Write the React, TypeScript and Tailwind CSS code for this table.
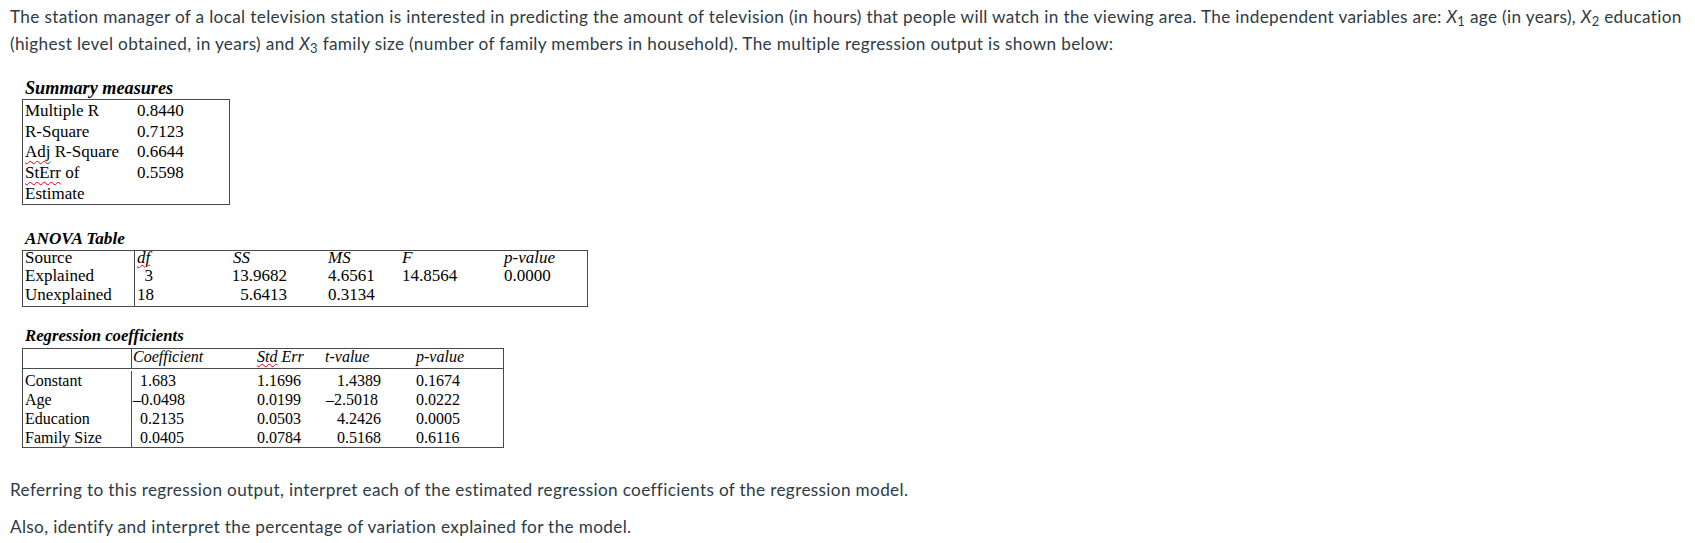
const serif = "font-['Liberation_Serif',serif] text-black";
const squiggle = "underline decoration-wavy decoration-red-600 decoration-1 underline-offset-[3px]";
const body = "font-['Lato',sans-serif] text-[17.2px] tracking-[0.34px] leading-[27px] text-[#2d3b45]";

const summary = [
  ["Multiple R", "0.8440"],
  ["R-Square", "0.7123"],
  ["Adj R-Square", "0.6644"],
  ["StErr of", "0.5598"],
  ["Estimate", ""],
];

const coefs = [
  { name: "Constant", coef: "1.683", neg: false, se: "1.1696", t: "1.4389", tneg: false, p: "0.1674" },
  { name: "Age", coef: "–0.0498", neg: true, se: "0.0199", t: "–2.5018", tneg: true, p: "0.0222" },
  { name: "Education", coef: "0.2135", neg: false, se: "0.0503", t: "4.2426", tneg: false, p: "0.0005" },
  { name: "Family Size", coef: "0.0405", neg: false, se: "0.0784", t: "0.5168", tneg: false, p: "0.6116" },
];

function Label({ text }: { text: string }) {
  // Word's spell-check squiggle on the abbreviations
  if (text.startsWith("Adj")) {
    return (
      <>
        <span className={squiggle}>Adj</span> R-Square
      </>
    );
  }
  if (text.startsWith("StErr")) {
    return (
      <>
        <span className={squiggle}>StErr</span> of
      </>
    );
  }
  return <>{text}</>;
}

export default function App() {
  return (
    <div className="min-h-screen bg-white pl-[10px] pr-[5px] pt-[3px]">
      {/* Question text */}
      <p className={body}>
        The station manager of a local television station is interested in predicting the amount of television (in hours) that
        people will watch in the viewing area. The independent variables are: <i>X</i>
        <sub>1</sub> age (in years), <i>X</i>
        <sub>2</sub> education (highest level obtained, in years) and <i>X</i>
        <sub>3</sub> family size (number of family members in household). The multiple regression output is shown below:
      </p>

      {/* Summary measures */}
      <div className={`${serif} mt-[22px] ml-[15px] text-[18.2px] leading-[18px] font-bold italic`}>Summary measures</div>
      <div className={`${serif} mt-[2px] ml-[12px] w-[208px] border border-[#4a4a4a] pt-[1px] text-[17px]`}>
        {summary.map(([k, v]) => (
          <div key={k} className="flex h-[20.7px] leading-[20.7px]">
            <div className="w-[112px] pl-[2px] whitespace-nowrap">
              <Label text={k} />
            </div>
            <div className="pl-[2px]">{v}</div>
          </div>
        ))}
      </div>

      {/* ANOVA */}
      <div className={`${serif} mt-[25px] ml-[15px] text-[17.2px] leading-[18px] font-bold italic`}>ANOVA Table</div>
      <div className={`${serif} mt-[1.5px] ml-[12px] w-[566px] border border-[#4a4a4a] text-[17px]`}>
        <div className="flex h-[18.5px] leading-[14px]">
          <div className="w-[112px] shrink-0 border-r border-[#4a4a4a] pl-[2px]">Source</div>
          <div className="w-[20px] shrink-0 pl-[2px] italic">
            <span className="underline decoration-wavy decoration-red-600 decoration-1 underline-offset-[1px]">df</span>
          </div>
          <div className="w-[135px] shrink-0 pl-[78px] italic">SS</div>
          <div className="w-[110px] shrink-0 pl-[38px] italic">MS</div>
          <div className="w-[102px] shrink-0 pl-[2px] italic">F</div>
          <div className="flex-1 pl-[2px] italic">p-value</div>
        </div>
        <div className="flex h-[18.5px] leading-[14px]">
          <div className="w-[112px] shrink-0 border-r border-[#4a4a4a] pl-[2px]">Explained</div>
          <div className="w-[20px] shrink-0 pr-[2px] text-right">3</div>
          <div className="w-[135px] shrink-0 pr-[3px] text-right">13.9682</div>
          <div className="w-[110px] shrink-0 pl-[38px]">4.6561</div>
          <div className="w-[102px] shrink-0 pl-[2px]">14.8564</div>
          <div className="flex-1 pl-[2px]">0.0000</div>
        </div>
        <div className="flex h-[18.5px] leading-[14px]">
          <div className="w-[112px] shrink-0 border-r border-[#4a4a4a] pl-[2px]">Unexplained</div>
          <div className="w-[20px] shrink-0 pl-[2px]">18</div>
          <div className="w-[135px] shrink-0 pr-[3px] text-right">5.6413</div>
          <div className="w-[110px] shrink-0 pl-[38px]">0.3134</div>
          <div className="w-[102px] shrink-0" />
          <div className="flex-1" />
        </div>
      </div>

      {/* Regression coefficients */}
      <div className={`${serif} mt-[19.5px] ml-[15px] text-[16.7px] leading-[18px] font-bold italic`}>
        Regression coefficients
      </div>
      <div className={`${serif} mt-[3px] ml-[12px] w-[482px] border border-[#4a4a4a] text-[16px]`}>
        <div className="flex h-[20px] leading-[16px] border-b border-[#4a4a4a] italic">
          <div className="w-[109px] shrink-0 border-r border-[#4a4a4a]" />
          <div className="w-[123px] shrink-0 pl-[1px]">Coefficient</div>
          <div className="w-[68px] shrink-0 pl-[2px]">
            <span className="underline decoration-wavy decoration-red-600 decoration-1 underline-offset-[1px]">Std</span> Err
          </div>
          <div className="w-[91px] shrink-0 pl-[2px]">t-value</div>
          <div className="flex-1 pl-[2px]">p-value</div>
        </div>
        {coefs.map((r, i) => (
          <div key={r.name} className={`flex leading-[19px] ${i === 0 ? "h-[21px] pt-[2px]" : "h-[19px]"}`}>
            <div className="w-[109px] shrink-0 border-r border-[#4a4a4a] pl-[2px] whitespace-nowrap">{r.name}</div>
            <div className={`w-[123px] shrink-0 ${r.neg ? "pl-[1px]" : "pl-[8px]"}`}>{r.coef}</div>
            <div className="w-[68px] shrink-0 pl-[2px]">{r.se}</div>
            <div className={`w-[91px] shrink-0 ${r.tneg ? "pl-[3px]" : "pl-[14px]"}`}>{r.t}</div>
            <div className="flex-1 pl-[2px]">{r.p}</div>
          </div>
        ))}
      </div>

      {/* Follow-up prompts */}
      <p className={`mt-[28px] ${body}`}>
        Referring to this regression output, interpret each of the estimated regression coefficients of the regression model.
      </p>
      <p className={`mt-[10px] ${body}`}>Also, identify and interpret the percentage of variation explained for the model.</p>
    </div>
  );
}
